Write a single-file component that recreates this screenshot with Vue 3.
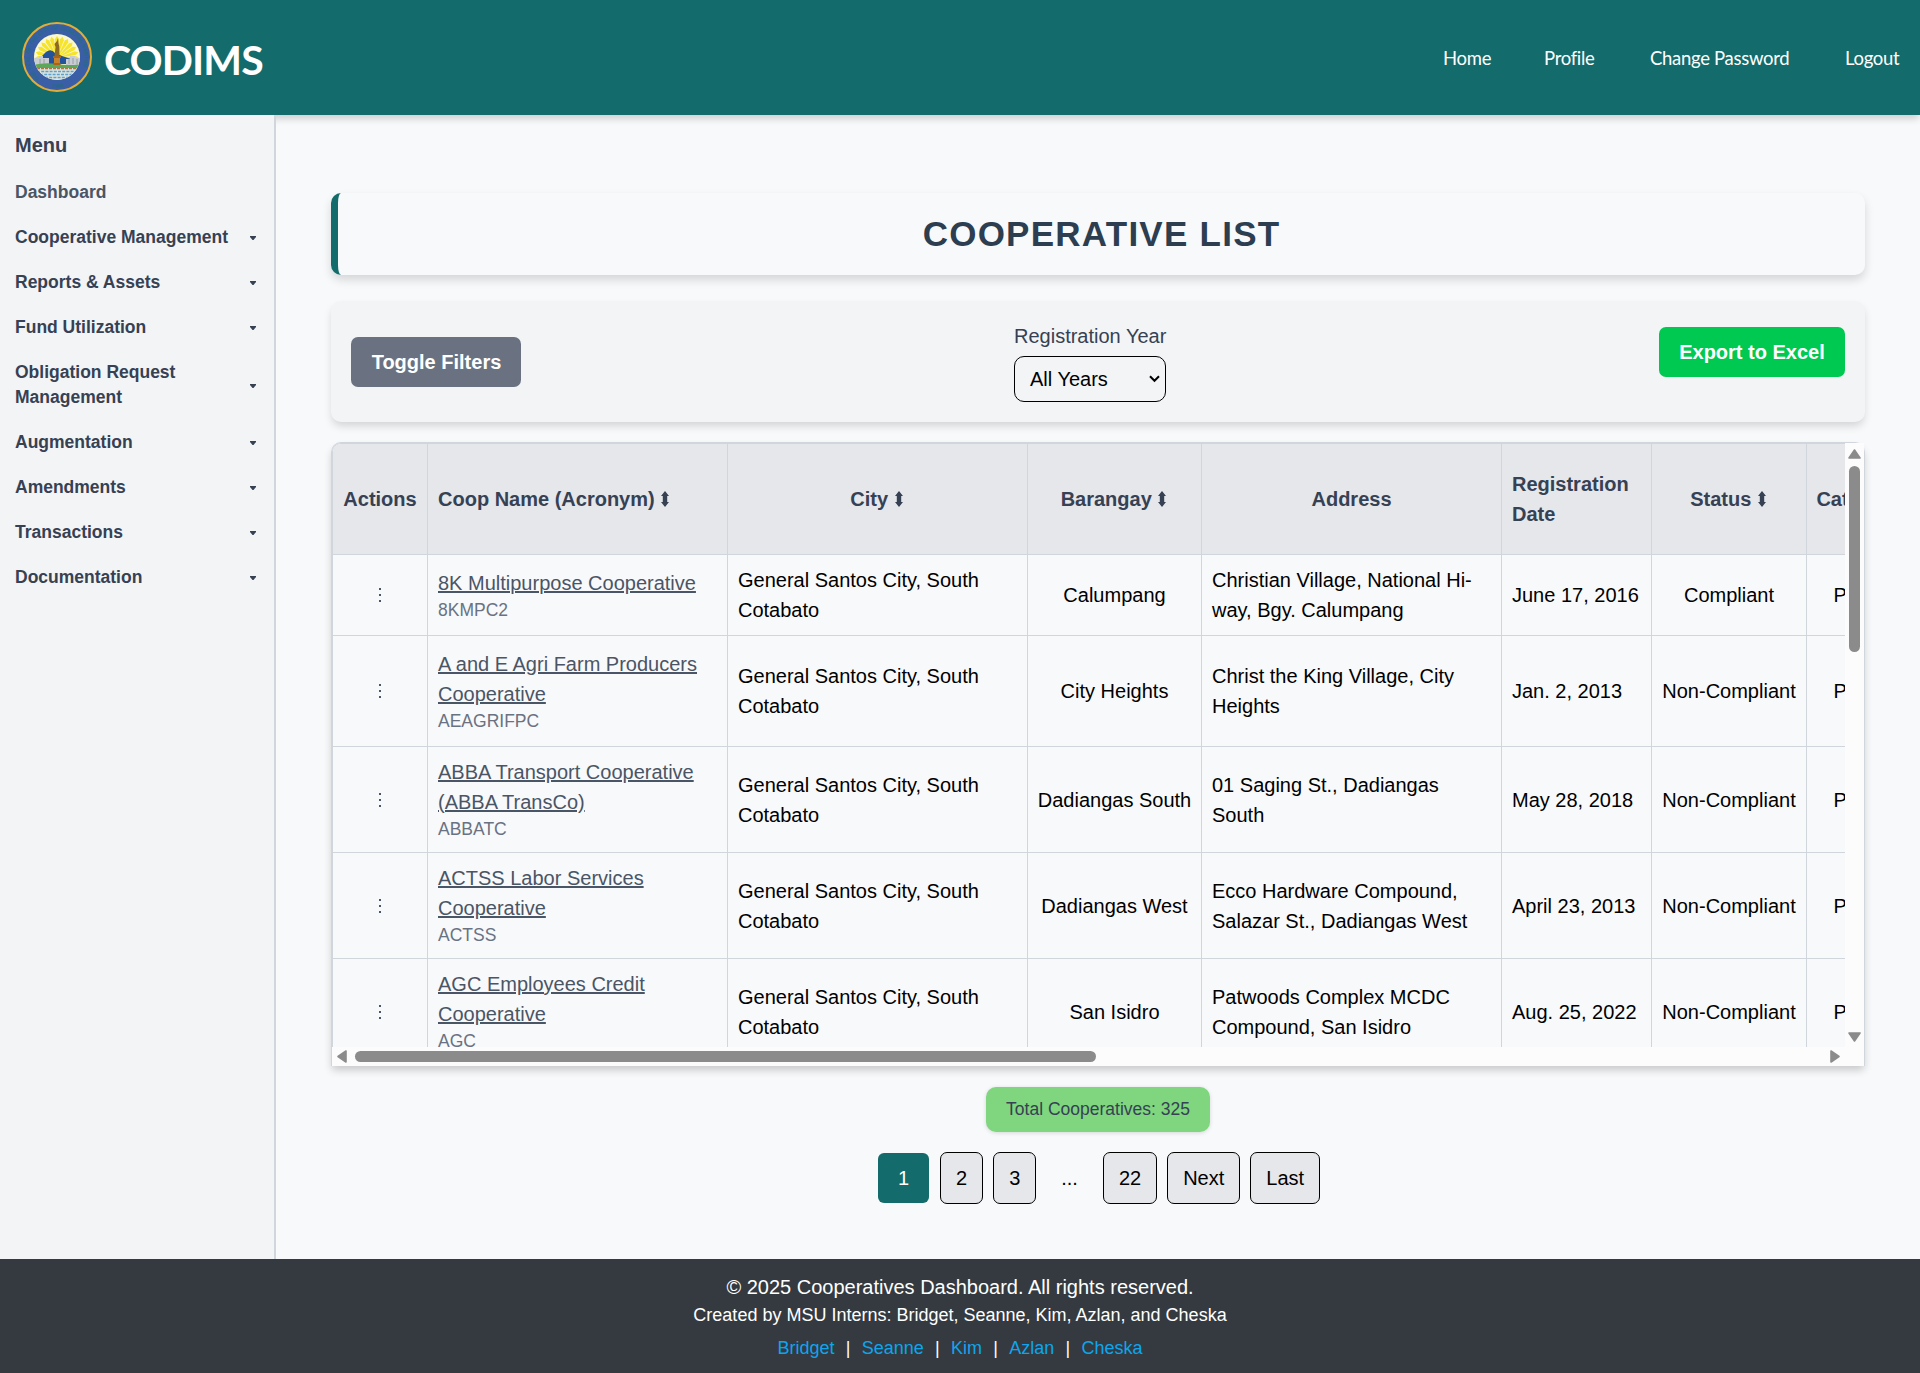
<script setup>
const nav = [
  { label: 'Home', width: 46 },
  { label: 'Profile', width: 51 },
  { label: 'Change Password', width: 140 },
  { label: 'Logout', width: 54 },
]
const menu = [
  'Cooperative Management',
  'Reports & Assets',
  'Fund Utilization',
  'Obligation Request Management',
  'Augmentation',
  'Amendments',
  'Transactions',
  'Documentation',
]
const columns = [
  { label: 'Actions', width: 95 },
  { label: 'Coop Name (Acronym)', width: 300, sort: true, left: true },
  { label: 'City', width: 300, sort: true },
  { label: 'Barangay', width: 174, sort: true },
  { label: 'Address', width: 300 },
  { label: 'Registration Date', width: 150, left: true },
  { label: 'Status', width: 155, sort: true },
  { label: 'Category', width: 123, sort: true },
]
const city = 'General Santos City, South Cotabato'
const rows = [
  { h: 81, name: '8K Multipurpose Cooperative', acr: '8KMPC2', brgy: 'Calumpang', addr: 'Christian Village, National Hi-way, Bgy. Calumpang', date: 'June 17, 2016', status: 'Compliant' },
  { h: 111, name: 'A and E Agri Farm Producers Cooperative', acr: 'AEAGRIFPC', brgy: 'City Heights', addr: 'Christ the King Village, City Heights', date: 'Jan. 2, 2013', status: 'Non-Compliant' },
  { h: 106, name: 'ABBA Transport Cooperative (ABBA TransCo)', acr: 'ABBATC', brgy: 'Dadiangas South', addr: '01 Saging St., Dadiangas South', date: 'May 28, 2018', status: 'Non-Compliant' },
  { h: 106, name: 'ACTSS Labor Services Cooperative', acr: 'ACTSS', brgy: 'Dadiangas West', addr: 'Ecco Hardware Compound, Salazar St., Dadiangas West', date: 'April 23, 2013', status: 'Non-Compliant' },
  { h: 106, name: 'AGC Employees Credit Cooperative', acr: 'AGC', brgy: 'San Isidro', addr: 'Patwoods Complex MCDC Compound, San Isidro', date: 'Aug. 25, 2022', status: 'Non-Compliant' },
]
const pages = ['2', '3', '...', '22', 'Next', 'Last']
const interns = ['Bridget', 'Seanne', 'Kim', 'Azlan', 'Cheska']
const rays = Array.from({ length: 13 }, (_, i) => -90 + i * 15)
</script>

<template>
  <div class="page">
    <header class="top">
      <div class="brand">
        <svg class="seal" width="72" height="72" viewBox="-36 -36 72 72">
          <defs>
            <clipPath id="disc"><circle r="22.8" /></clipPath>
            <path id="ringTop" d="M-17 21.5A27.4 27.4 0 1 1 17 21.5" />
            <path id="ringLow" d="M-9 29.6A31 31 0 0 0 9 29.6" />
          </defs>
          <circle r="34" fill="#3a5fa6" stroke="#e2ad37" stroke-width="2" />
          <circle r="23" fill="#fbf8cf" />
          <g clip-path="url(#disc)">
            <path v-for="a in rays" :key="a" d="M0 0L-2 -19L0 -22L2 -19Z" fill="#f5e32c" :transform="`translate(0 1) rotate(${a})`" />
            <path d="M-19 3L-11 -5Q-6 -9 -2 -4L5 -1L17 3V7H-19Z" fill="#24529b" />
            <path d="M-23 1h5v-2h4v2h6v7h-15zM9 2h4v-3h5v2h5v7H9z" fill="#c9ccd2" />
            <path d="M-17 2v5M-13 2v5M12 2v5M16 1v6M20 2v5" stroke="#8c949f" stroke-width=".8" />
            <path d="M-24 8Q-12 5 0 7T24 7V12H-24Z" fill="#5da75a" />
            <path d="M-24 11H24V24H-24Z" fill="#d9e3df" />
            <path d="M-20 11.5H20" stroke="#b9733a" stroke-width="1.6" stroke-dasharray="3 1" />
            <path d="M-20 14.5H20M-17 17.5H17M-12 20.5H12" stroke="#5f9fcb" stroke-width="1.3" stroke-dasharray="3 1.2" />
            <path d="M-3 7V0H3V7Z" fill="#c8822a" />
            <path d="M-4 -1H4V1H-4ZM-3.600 6H3.600V8H-3.600Z" fill="#a8641f" />
            <path d="M-2.500 -1L-1.500 -10L-2.500 -13L0 -16L1 -19L1.500 -14L2.300 -10L2.500 -1Z" fill="#8d6a22" />
          </g>
          <text class="ring"><textPath href="#ringTop" textLength="120">THE SEAL OF THE CITY OF GENERAL SANTOS</textPath></text>
          <text class="ring"><textPath href="#ringLow" startOffset="20%">1968</textPath></text>
        </svg>
        <span class="name">CODIMS</span>
      </div>
      <nav>
        <a v-for="n in nav" :key="n.label" :style="{ width: n.width + 'px' }">{{ n.label }}</a>
      </nav>
    </header>

    <div class="body">
      <aside>
        <h2>Menu</h2>
        <div class="item dash">Dashboard</div>
        <div v-for="m in menu" :key="m" class="item">
          <span>{{ m }}</span>
          <svg width="6" height="4" viewBox="0 0 6 4"><path d="M0 0H6V1L3.500 4H2.500L0 1Z" fill="#364153" /></svg>
        </div>
      </aside>

      <main>
        <h1>COOPERATIVE LIST</h1>

        <section class="filters">
          <button class="toggle">Toggle Filters</button>
          <div class="year">
            <label>Registration Year</label>
            <div class="select">
              <span>All Years</span>
              <svg width="11" height="8" viewBox="0 0 11 8"><path d="M1 1.200L5.500 5.800L10 1.200" fill="none" stroke="#000" stroke-width="2" /></svg>
            </div>
          </div>
          <button class="export">Export to Excel</button>
        </section>

        <section class="scroller">
          <div class="view">
            <table>
              <colgroup><col v-for="c in columns" :key="c.label" :style="{ width: c.width + 'px' }" /></colgroup>
              <thead>
                <tr>
                  <th v-for="c in columns" :key="c.label" :class="{ left: c.left }">
                    {{ c.label }}
                    <svg v-if="c.sort" class="sort" width="8" height="16" viewBox="0 0 8 16"><path d="M4 0L8 5H6.200V11H8L4 16L0 11H1.800V5H0Z" fill="#364153" /></svg>
                  </th>
                </tr>
              </thead>
              <tbody>
                <tr v-for="r in rows" :key="r.acr" :style="{ height: r.h + 'px' }">
                  <td class="mid">
                    <svg class="dots" width="2" height="14" viewBox="0 0 2 14"><path d="M0 0h2v2H0zM0 6h2v2H0zM0 12h2v2H0z" fill="#4a5565" /></svg>
                  </td>
                  <td><a class="coop">{{ r.name }}</a><div class="acr">{{ r.acr }}</div></td>
                  <td>{{ city }}</td>
                  <td class="mid">{{ r.brgy }}</td>
                  <td>{{ r.addr }}</td>
                  <td class="date">{{ r.date }}</td>
                  <td class="mid">{{ r.status }}</td>
                  <td class="mid">Primary</td>
                </tr>
              </tbody>
            </table>
          </div>
          <div class="vbar">
            <svg width="13" height="10" viewBox="0 0 13 10"><path d="M6.500 1L12 9H1Z" fill="#8b8b8b" stroke="#8b8b8b" stroke-width="1.600" stroke-linejoin="round" /></svg>
            <i></i>
            <svg width="13" height="10" viewBox="0 0 13 10"><path d="M6.500 9L12 1H1Z" fill="#8b8b8b" stroke="#8b8b8b" stroke-width="1.600" stroke-linejoin="round" /></svg>
          </div>
          <div class="hbar">
            <svg width="10" height="13" viewBox="0 0 10 13"><path d="M1 6.500L9 1V12Z" fill="#8b8b8b" stroke="#8b8b8b" stroke-width="1.600" stroke-linejoin="round" /></svg>
            <i></i>
            <svg width="10" height="13" viewBox="0 0 10 13"><path d="M9 6.500L1 1V12Z" fill="#8b8b8b" stroke="#8b8b8b" stroke-width="1.600" stroke-linejoin="round" /></svg>
          </div>
          <div class="corner"></div>
        </section>

        <div class="total">Total Cooperatives: 325</div>

        <div class="pager">
          <a class="current">1</a>
          <a v-for="p in pages" :key="p" :class="p === '...' ? 'gap' : 'pg'">{{ p }}</a>
        </div>
      </main>
    </div>

    <footer>
      <p>© 2025 Cooperatives Dashboard. All rights reserved.</p>
      <p class="by">Created by MSU Interns: Bridget, Seanne, Kim, Azlan, and Cheska</p>
      <div class="links">
        <template v-for="(n, i) in interns" :key="n">
          <span v-if="i">|</span><a>{{ n }}</a>
        </template>
      </div>
    </footer>
  </div>
</template>

<style>
body { margin: 0; background: #f8f9fb; }
</style>

<style scoped>
* { box-sizing: border-box; }
.page {
  width: 1920px;
  height: 1373px;
  display: flex;
  flex-direction: column;
  overflow: hidden;
  font: 20px/30px "Liberation Sans", Arial, sans-serif;
  color: #000;
}
svg { display: block; flex: none; }
.top {
  height: 115px;
  flex: none;
  background: #146b6b;
  box-shadow: 0 5px 7px -1px rgba(0, 0, 0, .16);
  display: flex;
  align-items: center;
  justify-content: space-between;
  padding: 0 21px;
  color: #fff;
}
.brand { display: flex; align-items: center; }
.seal { margin-top: -1px; }
.ring { font: 700 5.500px "Liberation Sans", Arial, sans-serif; fill: #256a86; }
.name { font: 700 41px/50px Lato, sans-serif; letter-spacing: -.900px; margin: 5px 0 0 11px; }
nav { display: flex; gap: 55px; font: 400 18.500px/30px Lato, sans-serif; }
nav a { white-space: nowrap; letter-spacing: -.3px; }
.body { flex: 1; display: flex; min-height: 0; }
aside {
  width: 276px;
  flex: none;
  background: #f3f4f6;
  border-right: 2px solid #d1d5dc;
  padding: 15px;
  color: #364153;
}
h2 { margin: 0; font-size: 20px; line-height: 30px; }
.item {
  margin-top: 20px;
  font-size: 17.500px;
  line-height: 25px;
  font-weight: 700;
  display: flex;
  align-items: center;
  justify-content: space-between;
  padding-right: 3px;
}
.item span { max-width: 220px; }
.item svg { margin-top: 1px; }
.dash { color: #4a5565; }
main { flex: 1; padding: 78px 55px 0; display: flex; flex-direction: column; align-items: stretch; }
h1 {
  margin: 0;
  height: 82px;
  border-left: 7px solid #146b6b;
  border-radius: 10px;
  box-shadow: 0 5px 10px rgba(0, 0, 0, .14);
  font-size: 35px;
  line-height: 82px;
  letter-spacing: 1.250px;
  text-align: center;
  color: #2c3e50;
}
.filters {
  margin-top: 26px;
  height: 121px;
  padding: 20px;
  border-radius: 10px;
  background: #f3f4f6;
  box-shadow: 0 5px 8px -1px rgba(0, 0, 0, .15);
  display: flex;
  justify-content: space-between;
}
button {
  border: 0;
  height: 50px;
  border-radius: 7px;
  color: #fff;
  font: 700 20px/30px "Liberation Sans", Arial, sans-serif;
  padding: 0;
}
.toggle { width: 170px; padding-left: 1px; margin-top: 16px; background: #6a7282; }
.year { width: 152px; display: flex; flex-direction: column; gap: 5px; }
.year label { color: #364153; white-space: nowrap; }
.select {
  height: 46px;
  border: 1px solid #000;
  border-radius: 10px;
  padding: 0 5px 0 15px;
  display: flex;
  align-items: center;
  justify-content: space-between;
}
.export { width: 186px; margin-top: 6px; background: #00c951; }
.scroller {
  margin-top: 20px;
  height: 624px;
  flex: none;
  border: 1px solid #d1d5dc;
  border-bottom: 0;
  border-radius: 10px 10px 0 0;
  box-shadow: 0 5px 8px -1px rgba(0, 0, 0, .2);
  display: grid;
  grid-template-columns: 1513px 19px;
  grid-template-rows: 604px 19px;
}
.view { overflow: hidden; border-left: 1px solid #d1d5dc; border-top: 1px solid #d1d5dc; border-top-left-radius: 9px; }
table { width: 1597px; table-layout: fixed; border-collapse: separate; border-spacing: 0; }
th, td { border: solid #d1d5dc; border-width: 0 1px 1px 0; padding: 0 10px; vertical-align: middle; }
th { height: 111px; background: #e5e7eb; color: #364153; white-space: nowrap; text-align: center; padding: 0; }
th.left { text-align: left; white-space: normal; padding: 0 10px; }
.sort { display: inline-block; vertical-align: -1px; margin: 0 2px 0 1px; }
.mid { text-align: center; white-space: nowrap; padding: 0; }
.date { white-space: nowrap; }
.dots { margin: 0 auto; }
.coop { color: #4a5565; text-decoration: underline; }
.acr { font-size: 17.500px; line-height: 25px; color: #6a7282; }
.vbar, .hbar { background: #fcfcfc; display: flex; align-items: center; }
.corner { background: #fcfcfc; }
.vbar { flex-direction: column; padding: 6px 0 5px; }
.vbar i { width: 11px; height: 186px; border-radius: 6px; background: #8b8b8b; margin: 7px 0 auto; }
.hbar { padding: 0 5px; }
.hbar i { width: 741px; height: 11px; border-radius: 6px; background: #8b8b8b; margin: 0 auto 0 8px; }
.total {
  align-self: center;
  width: 224px;
  height: 45px;
  margin-top: 21px;
  border-radius: 10px;
  background: #7fd67f;
  box-shadow: 0 1px 4px rgba(0, 0, 0, .14);
  color: #364153;
  font-size: 17.500px;
  line-height: 44px;
  text-align: center;
}
.pager { display: flex; justify-content: center; align-items: center; gap: 10px; margin-top: 20px; padding-left: 2px; }
.pg { border: 1px solid #000; border-radius: 7px; background: #e5e7eb; padding: 10px 15px; }
.gap { padding: 10px 15px; }
.current { background: #146b6b; color: #fff; border-radius: 6px; padding: 10px 20px; margin-right: 1px; }
footer {
  height: 114px;
  flex: none;
  background: #343a40;
  color: #fff;
  text-align: center;
  padding-top: 13px;
}
footer p { margin: 0; }
.by { font-size: 18px; line-height: 26px; }
.links { display: flex; justify-content: center; font-size: 18px; line-height: 30px; margin-top: 5px; }
.links span { margin: 0 11.250px; }
.links a { color: #0ea5ee; }
</style>
